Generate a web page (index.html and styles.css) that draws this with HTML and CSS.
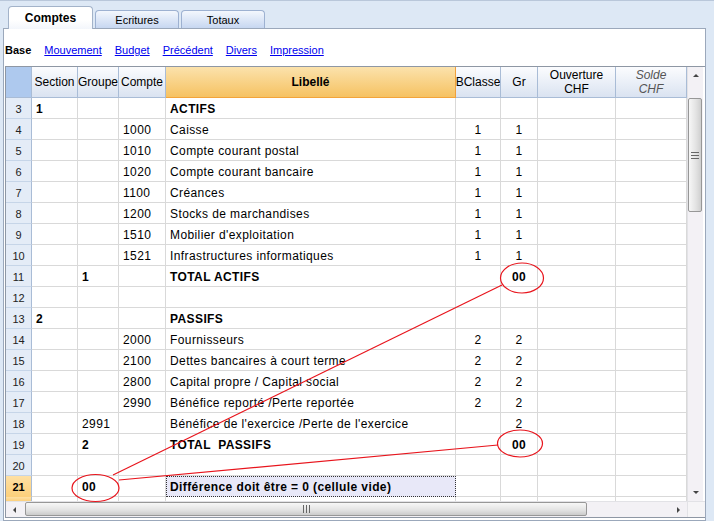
FILE: index.html
```html
<!DOCTYPE html>
<html lang="fr">
<head>
    <meta charset="UTF-8">
    <title>Comptes</title>
    <link rel="stylesheet" href="styles.css">
</head>
<body>
    <div class="window">
        <div class="tabs">
            <div class="tab active">Comptes</div>
            <div class="tab">Ecritures</div>
            <div class="tab">Totaux</div>
        </div>

        <div class="panel">
            <div class="views">
                <span class="view-current">Base</span>
                <a href="#">Mouvement</a>
                <a href="#">Budget</a>
                <a href="#">Précédent</a>
                <a href="#">Divers</a>
                <a href="#">Impression</a>
            </div>

            <div class="grid">
                <div class="grid-body">
                    <div class="table">
                        <div class="row head">
                            <div class="cell num"></div>
                            <div class="cell">Section</div>
                            <div class="cell">Groupe</div>
                            <div class="cell">Compte</div>
                            <div class="cell main">Libellé</div>
                            <div class="cell">BClasse</div>
                            <div class="cell">Gr</div>
                            <div class="cell center">Ouverture<br>CHF</div>
                            <div class="cell center muted">Solde<br>CHF</div>
                        </div>

                        <div class="row">
                            <div class="cell num">3</div>
                            <div class="cell bold">1</div>
                            <div class="cell"></div>
                            <div class="cell"></div>
                            <div class="cell bold">ACTIFS</div>
                            <div class="cell"></div>
                            <div class="cell"></div>
                            <div class="cell"></div>
                            <div class="cell"></div>
                        </div>
                        <div class="row">
                            <div class="cell num">4</div>
                            <div class="cell"></div>
                            <div class="cell"></div>
                            <div class="cell">1000</div>
                            <div class="cell">Caisse</div>
                            <div class="cell center">1</div>
                            <div class="cell center">1</div>
                            <div class="cell"></div>
                            <div class="cell"></div>
                        </div>
                        <div class="row">
                            <div class="cell num">5</div>
                            <div class="cell"></div>
                            <div class="cell"></div>
                            <div class="cell">1010</div>
                            <div class="cell">Compte courant postal</div>
                            <div class="cell center">1</div>
                            <div class="cell center">1</div>
                            <div class="cell"></div>
                            <div class="cell"></div>
                        </div>
                        <div class="row">
                            <div class="cell num">6</div>
                            <div class="cell"></div>
                            <div class="cell"></div>
                            <div class="cell">1020</div>
                            <div class="cell">Compte courant bancaire</div>
                            <div class="cell center">1</div>
                            <div class="cell center">1</div>
                            <div class="cell"></div>
                            <div class="cell"></div>
                        </div>
                        <div class="row">
                            <div class="cell num">7</div>
                            <div class="cell"></div>
                            <div class="cell"></div>
                            <div class="cell">1100</div>
                            <div class="cell">Créances</div>
                            <div class="cell center">1</div>
                            <div class="cell center">1</div>
                            <div class="cell"></div>
                            <div class="cell"></div>
                        </div>
                        <div class="row">
                            <div class="cell num">8</div>
                            <div class="cell"></div>
                            <div class="cell"></div>
                            <div class="cell">1200</div>
                            <div class="cell">Stocks de marchandises</div>
                            <div class="cell center">1</div>
                            <div class="cell center">1</div>
                            <div class="cell"></div>
                            <div class="cell"></div>
                        </div>
                        <div class="row">
                            <div class="cell num">9</div>
                            <div class="cell"></div>
                            <div class="cell"></div>
                            <div class="cell">1510</div>
                            <div class="cell">Mobilier d'exploitation</div>
                            <div class="cell center">1</div>
                            <div class="cell center">1</div>
                            <div class="cell"></div>
                            <div class="cell"></div>
                        </div>
                        <div class="row">
                            <div class="cell num">10</div>
                            <div class="cell"></div>
                            <div class="cell"></div>
                            <div class="cell">1521</div>
                            <div class="cell">Infrastructures informatiques</div>
                            <div class="cell center">1</div>
                            <div class="cell center">1</div>
                            <div class="cell"></div>
                            <div class="cell"></div>
                        </div>
                        <div class="row">
                            <div class="cell num">11</div>
                            <div class="cell"></div>
                            <div class="cell bold">1</div>
                            <div class="cell"></div>
                            <div class="cell bold">TOTAL ACTIFS</div>
                            <div class="cell"></div>
                            <div class="cell center bold">00</div>
                            <div class="cell"></div>
                            <div class="cell"></div>
                        </div>
                        <div class="row">
                            <div class="cell num">12</div>
                            <div class="cell"></div>
                            <div class="cell"></div>
                            <div class="cell"></div>
                            <div class="cell"></div>
                            <div class="cell"></div>
                            <div class="cell"></div>
                            <div class="cell"></div>
                            <div class="cell"></div>
                        </div>
                        <div class="row">
                            <div class="cell num">13</div>
                            <div class="cell bold">2</div>
                            <div class="cell"></div>
                            <div class="cell"></div>
                            <div class="cell bold">PASSIFS</div>
                            <div class="cell"></div>
                            <div class="cell"></div>
                            <div class="cell"></div>
                            <div class="cell"></div>
                        </div>
                        <div class="row">
                            <div class="cell num">14</div>
                            <div class="cell"></div>
                            <div class="cell"></div>
                            <div class="cell">2000</div>
                            <div class="cell">Fournisseurs</div>
                            <div class="cell center">2</div>
                            <div class="cell center">2</div>
                            <div class="cell"></div>
                            <div class="cell"></div>
                        </div>
                        <div class="row">
                            <div class="cell num">15</div>
                            <div class="cell"></div>
                            <div class="cell"></div>
                            <div class="cell">2100</div>
                            <div class="cell">Dettes bancaires à court terme</div>
                            <div class="cell center">2</div>
                            <div class="cell center">2</div>
                            <div class="cell"></div>
                            <div class="cell"></div>
                        </div>
                        <div class="row">
                            <div class="cell num">16</div>
                            <div class="cell"></div>
                            <div class="cell"></div>
                            <div class="cell">2800</div>
                            <div class="cell">Capital propre / Capital social</div>
                            <div class="cell center">2</div>
                            <div class="cell center">2</div>
                            <div class="cell"></div>
                            <div class="cell"></div>
                        </div>
                        <div class="row">
                            <div class="cell num">17</div>
                            <div class="cell"></div>
                            <div class="cell"></div>
                            <div class="cell">2990</div>
                            <div class="cell">Bénéfice reporté /Perte reportée</div>
                            <div class="cell center">2</div>
                            <div class="cell center">2</div>
                            <div class="cell"></div>
                            <div class="cell"></div>
                        </div>
                        <div class="row">
                            <div class="cell num">18</div>
                            <div class="cell"></div>
                            <div class="cell">2991</div>
                            <div class="cell"></div>
                            <div class="cell">Bénéfice de l'exercice /Perte de l'exercice</div>
                            <div class="cell"></div>
                            <div class="cell center">2</div>
                            <div class="cell"></div>
                            <div class="cell"></div>
                        </div>
                        <div class="row">
                            <div class="cell num">19</div>
                            <div class="cell"></div>
                            <div class="cell bold">2</div>
                            <div class="cell"></div>
                            <div class="cell bold">TOTAL  PASSIFS</div>
                            <div class="cell"></div>
                            <div class="cell center bold">00</div>
                            <div class="cell"></div>
                            <div class="cell"></div>
                        </div>
                        <div class="row">
                            <div class="cell num">20</div>
                            <div class="cell"></div>
                            <div class="cell"></div>
                            <div class="cell"></div>
                            <div class="cell"></div>
                            <div class="cell"></div>
                            <div class="cell"></div>
                            <div class="cell"></div>
                            <div class="cell"></div>
                        </div>
                        <div class="row current">
                            <div class="cell num">21</div>
                            <div class="cell"></div>
                            <div class="cell bold">00</div>
                            <div class="cell"></div>
                            <div class="cell bold focus">Différence doit être = 0 (cellule vide)</div>
                            <div class="cell"></div>
                            <div class="cell"></div>
                            <div class="cell"></div>
                            <div class="cell"></div>
                        </div>
                        <div class="row partial current">
                            <div class="cell num"></div>
                            <div class="cell"></div>
                            <div class="cell"></div>
                            <div class="cell"></div>
                            <div class="cell"></div>
                            <div class="cell"></div>
                            <div class="cell"></div>
                            <div class="cell"></div>
                            <div class="cell"></div>
                        </div>
                    </div>

                    <div class="vscroll">
                        <div class="sb-btn"><span class="arrow up"></span></div>
                        <div class="thumb v"><span class="grip"></span></div>
                        <div class="sb-fill"></div>
                        <div class="sb-btn"><span class="arrow down"></span></div>
                    </div>
                </div>

                <div class="hscroll">
                    <div class="sb-btn"><span class="arrow left"></span></div>
                    <div class="thumb h"><span class="grip"></span></div>
                    <div class="sb-fill"></div>
                    <div class="sb-btn"><span class="arrow right"></span></div>
                    <div class="sb-corner"></div>
                </div>
            </div>
        </div>

        <svg class="marks" width="714" height="521" viewBox="0 0 714 521">
            <ellipse cx="522" cy="277" rx="21.5" ry="15" />
            <ellipse cx="520" cy="442.5" rx="22.5" ry="13.5" />
            <ellipse cx="95.5" cy="487" rx="23.5" ry="13.5" />
            <line x1="113" y1="474" x2="502" y2="284" />
            <line x1="119" y1="479" x2="498" y2="444" />
        </svg>
    </div>
</body>
</html>
```

FILE: styles.css
```css
body {
    margin: 0;
    background-color: #dde8f5;
    font-family: "Liberation Sans", Arial, sans-serif;
    color: #000;
}

.window {
    position: relative;
    width: 714px;
    height: 521px;
    overflow: hidden;
    border-top: 1px solid #b9c7da;
    box-sizing: border-box;
}

/* tabs */

.tabs {
    display: flex;
    align-items: flex-end;
    gap: 2px;
    height: 27px;
    padding-left: 8px;
}

.tab {
    width: 84px;
    height: 18px;
    box-sizing: border-box;
    border: 1px solid #9db1d1;
    border-bottom: none;
    border-radius: 4px 4px 0 0;
    background: linear-gradient(#f3f7fd, #c7d7f1);
    font-size: 11px;
    line-height: 18px;
    text-align: center;
}

.tab.active {
    width: 85px;
    height: 23px;
    margin-bottom: -1px;
    position: relative;
    z-index: 1;
    background: linear-gradient(#ffffff 60%, #f3f6fb);
    border-color: #a3b3c9;
    font-size: 12px;
    font-weight: bold;
    line-height: 22px;
}

/* panel */

.panel {
    width: 703px;
    height: 493px;
    margin-left: 3px;
    box-sizing: border-box;
    border: 1px solid #9ba8bb;
    background-color: #fff;
}

.views {
    display: flex;
    align-items: center;
    gap: 13px;
    height: 37px;
    padding: 5px 0 0 1px;
    box-sizing: border-box;
    font-size: 11px;
}

.views a {
    color: #0000ee;
}

.view-current {
    font-weight: bold;
}

/* grid */

.grid {
    width: 699px;
    margin-left: 1px;
    border: 1px solid #8e97a4;
    border-right: none;
}

.grid-body {
    display: flex;
    height: 434px;
    overflow: hidden;
}

.table {
    width: 681px;
}

.row {
    display: grid;
    grid-template-columns: 26px 46px 41px 47px 290px 45px 37px 78px 71px;
    height: 21px;
    font-size: 12px;
    letter-spacing: 0.4px;
}

.cell {
    box-sizing: border-box;
    border-right: 1px solid #d9d9d9;
    border-bottom: 1px solid #d9d9d9;
    padding: 1px 4px 0;
    line-height: 20px;
    white-space: pre;
    overflow: hidden;
}

.cell.center {
    text-align: center;
    padding: 1px 0 0;
}

.cell.bold {
    font-weight: bold;
}

.cell.num {
    padding: 1px 0 0;
    text-align: center;
    font-size: 11px;
    letter-spacing: 0;
    color: #222;
    background-color: #e4ecf7;
    border-right-color: #a9bcd6;
    border-bottom-color: #c6d5e8;
}

.row.head {
    height: 31px;
    letter-spacing: 0;
}

.row.head .cell {
    display: flex;
    align-items: center;
    justify-content: center;
    padding: 0;
    line-height: 14px;
    text-align: center;
    white-space: normal;
    background: linear-gradient(#fbfcfe, #dae3f1);
    border-right-color: #a9bcd6;
    border-bottom-color: #a9bcd6;
}

.row.head .cell.num {
    background: #aec9ee;
}

.row.head .cell.main {
    font-weight: bold;
    background: linear-gradient(#fbe2ac, #f6c262);
    border-right-color: #efa03c;
    border-bottom-color: #f3a43a;
}

.row.head .cell.muted {
    font-style: italic;
    color: #555;
}

.row.current .cell.num {
    background: linear-gradient(#fee0a4, #fcd07c);
    font-weight: bold;
    color: #000;
    border-bottom-color: #fcd07c;
}

.cell.focus {
    background-color: #e8e8f8;
    border: 1px dotted #333;
    line-height: 18px;
    padding-left: 3px;
}

.row.partial {
    height: 4px;
}

.row.partial .cell {
    border-bottom: none;
}

/* scrollbars */

.vscroll {
    display: flex;
    flex-direction: column;
    width: 16px;
    background-color: #f3f1f5;
    border-left: 1px solid #e2e2e6;
    box-sizing: border-box;
}

.hscroll {
    display: flex;
    height: 16px;
    background-color: #f3f1f5;
    border-top: 1px solid #e2e2e6;
    box-sizing: border-box;
}

.sb-btn {
    display: flex;
    align-items: center;
    justify-content: center;
    flex: 0 0 17px;
}

.sb-fill {
    flex: 1;
}

.sb-corner {
    width: 17px;
    background-color: #f6f5f7;
    border-left: 1px solid #e2e2e6;
}

.arrow {
    width: 0;
    height: 0;
    border: 3px solid transparent;
}

.arrow.up {
    border-bottom-color: #444;
    border-top-width: 0;
}

.arrow.down {
    border-top-color: #444;
    border-bottom-width: 0;
}

.arrow.left {
    border-right-color: #444;
    border-left-width: 0;
}

.arrow.right {
    border-left-color: #444;
    border-right-width: 0;
}

.thumb {
    display: flex;
    align-items: center;
    justify-content: center;
    box-sizing: border-box;
    border: 1px solid #979797;
    border-radius: 2px;
}

.thumb.v {
    height: 114px;
    margin: 14px 1px 0 0;
    background: linear-gradient(to right, #f7f7f7, #e2e2e2 60%, #cfcfcf);
}

.thumb.h {
    width: 562px;
    margin: 0 0 1px 2px;
    background: linear-gradient(#f7f7f7, #e2e2e2 60%, #cbcbcb);
}

.thumb.v .grip {
    width: 8px;
    height: 5px;
    border-top: 1px solid #666;
    border-bottom: 1px solid #666;
    background: linear-gradient(transparent 2px, #666 2px, #666 3px, transparent 3px);
}

.thumb.h .grip {
    width: 5px;
    height: 8px;
    border-left: 1px solid #666;
    border-right: 1px solid #666;
    background: linear-gradient(to right, transparent 2px, #666 2px, #666 3px, transparent 3px);
}

/* annotations drawn over the grid */

.marks {
    position: absolute;
    top: 0;
    left: 0;
    pointer-events: none;
}

.marks ellipse,
.marks line {
    fill: none;
    stroke: #e8141c;
    stroke-width: 1.2;
}
```
